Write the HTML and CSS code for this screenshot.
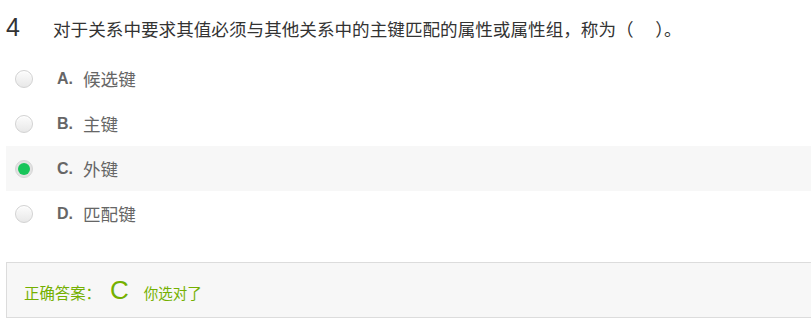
FILE: index.html
```html
<!DOCTYPE html>
<html lang="zh-CN">
<head>
<meta charset="utf-8">
<title>题目 4</title>
<link rel="stylesheet" href="styles.css">
</head>
<body>
<div class="quiz">
  <div class="question">
    <span class="q-num">4</span>
    <span class="q-text">对于关系中要求其值必须与其他关系中的主键匹配的属性或属性组，称为（　&nbsp;）。</span>
  </div>
  <ul class="options">
    <li class="option"><span class="radio"></span><span class="opt-label">A.</span><span class="opt-text">候选键</span></li>
    <li class="option"><span class="radio"></span><span class="opt-label">B.</span><span class="opt-text">主键</span></li>
    <li class="option selected"><span class="radio checked"></span><span class="opt-label">C.</span><span class="opt-text">外键</span></li>
    <li class="option"><span class="radio"></span><span class="opt-label">D.</span><span class="opt-text">匹配键</span></li>
  </ul>
  <div class="answer">
    <span class="ans-title">正确答案：</span>
    <span class="ans-key">C</span>
    <span class="ans-note">你选对了</span>
  </div>
</div>
</body>
</html>
```
FILE: styles.css
```css
html, body {
  margin: 0;
  padding: 0;
  overflow: hidden;
  background: #fff;
}
body {
  font-family: "Noto Sans CJK SC", "Liberation Sans", sans-serif;
  color: #333;
}
.quiz {
  width: 811px;
}
.question {
  display: flex;
  align-items: center;
  height: 56px;
  padding-left: 6px;
}
.q-num {
  width: 47px;
  font-family: "Liberation Sans", "Noto Sans CJK SC", sans-serif;
  font-size: 25px;
  color: #333;
  line-height: 1;
  padding-bottom: 2px;
}
.q-text {
  font-size: 17.6px;
  color: #333;
  white-space: nowrap;
}
.options {
  list-style: none;
  margin: 0;
  padding: 0;
}
.option {
  display: flex;
  align-items: center;
  height: 45px;
  margin-left: 6px;
  margin-right: -20px;
  padding-left: 9px;
}
.option.selected {
  background: #f7f7f7;
}
.radio {
  box-sizing: border-box;
  width: 18px;
  height: 18px;
  border-radius: 50%;
  border: 1px solid #d2d2d2;
  background: linear-gradient(#fcfcfc, #e8e8e8);
  box-shadow: inset 0 1px 1px #fff;
  margin-right: 24px;
  position: relative;
}
.radio.checked {
  background: #e2e2e2;
  border-color: #d6d6d6;
  box-shadow: none;
}
.radio.checked::after {
  content: "";
  position: absolute;
  left: 2px;
  top: 2px;
  width: 12px;
  height: 12px;
  border-radius: 50%;
  background: #18c55a;
}
.opt-label {
  font-family: "Liberation Sans", sans-serif;
  font-weight: bold;
  font-size: 16px;
  color: #666;
  width: 26px;
}
.opt-text {
  font-size: 17.6px;
  color: #666;
}
.answer {
  display: flex;
  align-items: baseline;
  box-sizing: border-box;
  height: 56px;
  margin: 26px -20px 0 6px;
  padding: 12px 0 0 17px;
  background: #f7f7f7;
  border: 1px solid #dcdcdc;
  color: #74b000;
}
.ans-title {
  font-size: 15.4px;
}
.ans-key {
  font-family: "Liberation Sans", sans-serif;
  font-size: 26px;
  margin: 0 15px 0 9px;
}
.ans-note {
  font-size: 14.5px;
}
```
